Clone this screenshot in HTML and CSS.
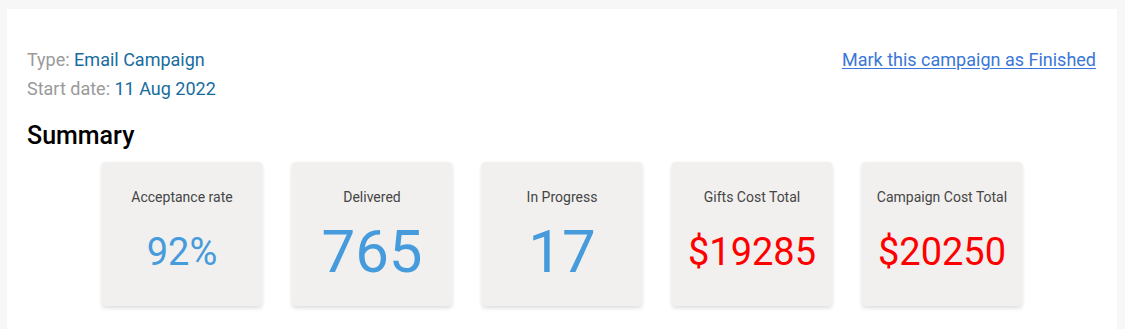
FILE: index.html
```html
<!DOCTYPE html>
<html lang="en">
<head>
<meta charset="utf-8">
<title>Campaign Summary</title>
<link rel="stylesheet" href="styles.css">
</head>
<body>
<div class="panel">
  <div class="header">
    <div class="meta">
      <div class="meta-line"><span class="meta-label">Type:</span> <span class="meta-value">Email Campaign</span></div>
      <div class="meta-line"><span class="meta-label">Start date:</span> <span class="meta-value">11 Aug 2022</span></div>
    </div>
    <a class="finish-link" href="#">Mark this campaign as Finished</a>
  </div>
  <h2 class="summary-title">Summary</h2>
  <div class="cards">
    <div class="card">
      <div class="card-label">Acceptance rate</div>
      <div class="card-value"><span class="val val-blue val-md">92%</span></div>
    </div>
    <div class="card">
      <div class="card-label">Delivered</div>
      <div class="card-value"><span class="val val-blue val-lg">765</span></div>
    </div>
    <div class="card">
      <div class="card-label">In Progress</div>
      <div class="card-value"><span class="val val-blue val-lg">17</span></div>
    </div>
    <div class="card">
      <div class="card-label">Gifts Cost Total</div>
      <div class="card-value"><span class="val val-red val-md">$19285</span></div>
    </div>
    <div class="card">
      <div class="card-label">Campaign Cost Total</div>
      <div class="card-value"><span class="val val-red val-md">$20250</span></div>
    </div>
  </div>
</div>
</body>
</html>
```
FILE: styles.css
```css
html, body {
  margin: 0;
  padding: 0;
}
body {
  background: #f7f7f7;
  font-family: Roboto, "Liberation Sans", Arial, sans-serif;
  height: 329px;
  overflow: hidden;
}
.panel {
  background: #ffffff;
  margin: 9px 8px 0 7px;
  padding: 36px 21px 10px 20px;
  height: 320px;
  box-sizing: border-box;
}
.header {
  display: flex;
  justify-content: space-between;
  align-items: flex-start;
}
.meta-line {
  font-size: 18px;
  line-height: 29px;
}
.meta-label {
  color: #9a9a9a;
}
.meta-value {
  color: #176c9e;
}
.finish-link {
  font-size: 18px;
  line-height: 29px;
  color: #3a77d8;
  text-decoration: underline;
  text-underline-offset: 2px;
}
.summary-title {
  margin: 18px 0 0 0;
  font-size: 25px;
  font-weight: 500;
  line-height: 30px;
  color: #000;
}
.cards {
  display: flex;
  justify-content: center;
  gap: 30px;
  margin: 11px -1px 0 0;
}
.card {
  width: 160px;
  height: 144px;
  box-sizing: border-box;
  padding-top: 25px;
  background: #f1f0ef;
  border-radius: 4px;
  box-shadow: 0 2px 4px rgba(0, 0, 0, 0.14);
  display: flex;
  flex-direction: column;
  align-items: center;
}
.card-label {
  font-size: 14px;
  line-height: 20px;
  color: #454545;
}
.card-value {
  height: 90px;
  display: flex;
  align-items: center;
  justify-content: center;
}
.val {
  line-height: 1;
}
.val-md {
  font-size: 38px;
}
.val-lg {
  font-size: 60px;
}
.val-blue {
  color: #459bdb;
}
.val-red {
  color: #ff0000;
}
```
